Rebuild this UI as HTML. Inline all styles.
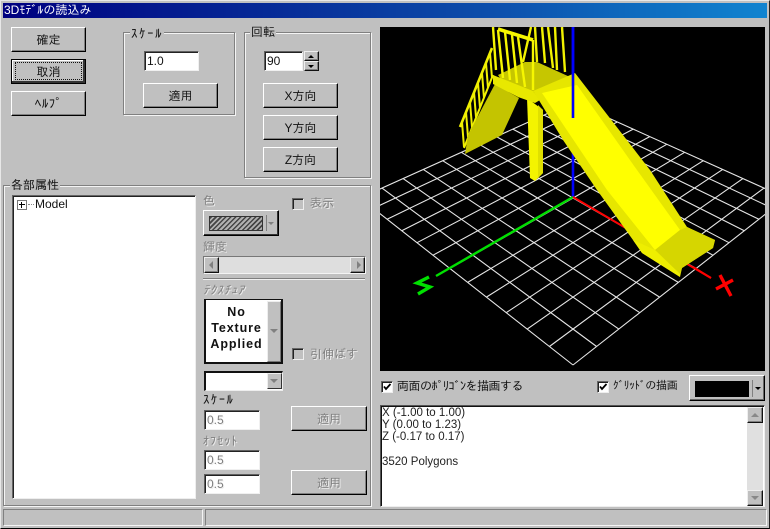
<!DOCTYPE html>
<html lang="ja"><head><meta charset="utf-8"><title>3Dモデルの読込み</title>
<style>
html,body{margin:0;padding:0;width:770px;height:529px;overflow:hidden;background:#c0c0c0}
body{position:relative;font:12px/14px "Liberation Sans","IPAGothic","Noto Sans CJK JP",sans-serif;color:#111}
div,span{position:absolute;box-sizing:border-box}
.t{white-space:nowrap}
.title{left:3px;top:3px;width:764px;height:15px;background:linear-gradient(90deg,#000080,#0b49a8 60%,#1084d0);color:#fff;padding-left:1px;font-size:12px;line-height:15px}
.btn{background:#c0c0c0;border:1px solid;border-color:#fff #000 #000 #fff;box-shadow:inset -1px -1px 0 #808080;text-align:center;font-size:12px;display:flex;align-items:center;justify-content:center}
.dis{color:#808080;text-shadow:1px 1px 0 #eee}
.grp{border:1px solid #808080;box-shadow:1px 1px 0 #f4f4f4,inset 1px 1px 0 #f4f4f4}
.lbl{background:#c0c0c0;padding:0 1px;white-space:nowrap;font-size:12px;line-height:13px}
.edit{background:#fff;border:1px solid;border-color:#606060 #f0f0f0 #f0f0f0 #606060;box-shadow:inset 1px 1px 0 #222;padding:2px 0 0 2px;font:12px/14px "Liberation Sans",sans-serif}
.chk{width:12px;height:12px;background:#fff;border:1px solid;border-color:#666 #eee #eee #666;box-shadow:inset 1px 1px 0 #222}
.chk.d{background:#c0c0c0}
.sb{background:#c0c0c0;border:1px solid;border-color:#eee #111 #111 #eee;box-shadow:inset -1px -1px 0 #808080}
.up,.dn{width:0;height:0;border-left:4px solid transparent;border-right:4px solid transparent}
.up{border-bottom:4px solid #666}.dn{border-top:4px solid #666}
</style></head><body>
<div style="left:0;top:0;width:770px;height:529px;border:1px solid;border-color:#e8e8e8 #222 #000 #e8e8e8"></div>
<div class="title t">3Dﾓﾃﾞﾙの読込み</div>

<div class="btn" style="left:11px;top:27px;width:75px;height:25px">確定</div>
<div class="btn" style="left:11px;top:59px;width:75px;height:25px;outline:1px solid #000;outline-offset:-1px;box-shadow:inset -2px -2px 0 #333,inset 1px 1px 0 #fff">取消</div>
<div style="left:15px;top:62px;width:67px;height:18px;border:1px dotted #111"></div>
<div class="btn" style="left:11px;top:91px;width:75px;height:25px;font-size:13px;letter-spacing:.5px">ﾍﾙﾌﾟ</div>

<div class="grp" style="left:123px;top:32px;width:112px;height:83px"></div>
<div class="lbl" style="left:130px;top:27px;font-size:13px;letter-spacing:1.5px">ｽｹｰﾙ</div>
<div class="edit" style="left:144px;top:51px;width:55px;height:20px">1.0</div>
<div class="btn" style="left:143px;top:83px;width:75px;height:25px">適用</div>

<div class="grp" style="left:244px;top:32px;width:127px;height:146px"></div>
<div class="lbl" style="left:250px;top:26px;">回転</div>
<div class="edit" style="left:264px;top:51px;width:39px;height:20px">90</div>
<div class="sb" style="left:304px;top:51px;width:15px;height:10px"><span class="up" style="left:3px;top:3px;border-left-width:3px;border-right-width:3px;border-bottom-width:3px;border-bottom-color:#000"></span></div>
<div class="sb" style="left:304px;top:61px;width:15px;height:10px"><span class="dn" style="left:3px;top:3px;border-left-width:3px;border-right-width:3px;border-top-width:3px;border-top-color:#000"></span></div>
<div class="btn" style="left:263px;top:83px;width:75px;height:25px">X方向</div>
<div class="btn" style="left:263px;top:115px;width:75px;height:25px">Y方向</div>
<div class="btn" style="left:263px;top:147px;width:75px;height:25px">Z方向</div>

<div class="grp" style="left:3px;top:185px;width:368px;height:321px"></div>
<div class="lbl" style="left:10px;top:178px;line-height:14px">各部属性</div>
<div style="left:12px;top:195px;width:184px;height:304px;background:#fff;border:1px solid;border-color:#666 #eee #eee #666;box-shadow:inset 1px 1px 0 #222"></div>
<div style="left:17px;top:200px;width:10px;height:10px;border:1px solid #777;background:#fff"></div>
<div style="left:19px;top:204px;width:6px;height:1px;background:#000"></div>
<div style="left:21px;top:202px;width:1px;height:6px;background:#000"></div>
<div style="left:28px;top:204px;width:6px;border-top:1px dotted #888"></div>
<div class="t" style="left:35px;top:197px;font:12px/14px 'Liberation Sans',sans-serif">Model</div>

<div class="t dis" style="left:203px;top:194px;">色</div>
<div class="btn" style="left:203px;top:210px;width:76px;height:26px;box-shadow:inset -1px -1px 0 #333"></div>
<div style="left:209px;top:216px;width:54px;height:15px;border:1px solid #333;background:repeating-linear-gradient(135deg,#444 0 1.5px,#b0b0b0 1.5px 3.5px)"></div>
<div style="left:266px;top:215px;width:1px;height:16px;background:#808080"></div>
<span class="dn" style="left:268px;top:222px;border-left-width:3px;border-right-width:3px;border-top-width:3px;border-top-color:#808080"></span>
<div class="chk d" style="left:292px;top:198px"></div>
<div class="t dis" style="left:310px;top:196px;">表示</div>
<div class="t dis" style="left:203px;top:240px;">輝度</div>
<div style="left:203px;top:256px;width:163px;height:18px;background:#dedede;border:1px solid;border-color:#777 #f4f4f4 #f4f4f4 #777"></div>
<div class="sb" style="left:204px;top:257px;width:15px;height:16px"><span style="left:4px;top:3px;border:4px solid transparent;border-left:0;border-right:4px solid #808080"></span></div>
<div class="sb" style="left:350px;top:257px;width:15px;height:16px"><span style="left:6px;top:3px;border:4px solid transparent;border-right:0;border-left:4px solid #808080"></span></div>
<div style="left:203px;top:278px;width:162px;height:2px;background:#808080;border-bottom:1px solid #f0f0f0"></div>
<div class="t dis" style="left:203px;top:283px;font-style:italic;letter-spacing:1px">ﾃｸｽﾁｭｱ</div>
<div style="left:204px;top:299px;width:79px;height:65px;background:#fff;border:1px solid #111;border-width:1px 2px 2px 2px"></div>
<div style="left:206px;top:304px;width:61px;text-align:center;font:bold 12.5px/16px 'Liberation Sans',sans-serif;letter-spacing:.9px;color:#111">No<br>Texture<br>Applied</div>
<div style="left:267px;top:301px;width:14px;height:61px;background:#c0c0c0;border:1px solid;border-color:#eee #777 #777 #eee"></div>
<span class="dn" style="left:270px;top:329px;border-top-color:#808080"></span>
<div class="chk d" style="left:292px;top:348px"></div>
<div class="t dis" style="left:310px;top:347px;">引伸ばす</div>
<div style="left:204px;top:371px;width:79px;height:20px;background:#fff;border:1px solid;border-color:#111 #eee #eee #111;border-width:2px 1px 1px 2px"></div>
<div style="left:267px;top:373px;width:15px;height:16px;background:#c0c0c0;border:1px solid;border-color:#eee #333 #333 #eee"></div>
<span class="dn" style="left:270px;top:379px;border-top-color:#808080"></span>
<div class="t" style="left:203px;top:393px;font-size:13px;letter-spacing:1.3px;color:#111">ｽｹｰﾙ</div>
<div class="edit dis" style="left:204px;top:410px;width:56px;height:20px">0.5</div>
<div class="btn dis" style="left:291px;top:406px;width:76px;height:25px">適用</div>
<div class="t dis" style="left:203px;top:434px;letter-spacing:1px">ｵﾌｾｯﾄ</div>
<div class="edit dis" style="left:204px;top:450px;width:56px;height:20px">0.5</div>
<div class="edit dis" style="left:204px;top:474px;width:56px;height:20px">0.5</div>
<div class="btn dis" style="left:291px;top:470px;width:76px;height:25px">適用</div>

<svg style="position:absolute;left:380px;top:27px" width="385" height="344" viewBox="380 27 385 344">
<rect x="380" y="27" width="385" height="344" fill="#000"/>
<g stroke="#e6e6e6" stroke-width="1.1" fill="none">
<path d="M573 365L786 198M549.4 346.5L764 188.1M527.2 329.1L742.9 178.6M506.2 312.7L722.7 169.4M486.4 297.1L703.3 160.7M467.7 282.4L684.7 152.3M449.9 268.5L666.8 144.3M433 255.2L649.7 136.6M417 242.7L633.2 129.1M401.7 230.7L617.3 122M387.1 219.3L602 115.1M373.2 208.4L587.2 108.4M360 198L573 102"/>
<path d="M573 365L360 198M596.6 346.5L382 188.1M618.8 329.1L403.1 178.6M639.8 312.7L423.3 169.4M659.6 297.1L442.7 160.7M678.3 282.4L461.3 152.3M696.1 268.5L479.2 144.3M713 255.2L496.3 136.6M729 242.7L512.8 129.1M744.3 230.7L528.7 122M758.9 219.3L544 115.1M772.8 208.4L558.8 108.4M786 198L573 102"/>
</g>
<!-- axes -->
<path d="M573 27V197" stroke="#0000ff" stroke-width="2.6"/>
<path d="M573 197L436 276" stroke="#00e000" stroke-width="2.4"/>
<path d="M573 197L711 278" stroke="#ff0000" stroke-width="2"/>
<path d="M429 277L417 283L430 287L418 294" stroke="#00e000" stroke-width="3.4" fill="none"/>
<path d="M720 275L731 296M716 289L733 280" stroke="#ff0000" stroke-width="3.4" fill="none"/>
<!-- stair rail lattice -->
<g stroke="#f0f000" stroke-width="2" fill="none">
<path d="M492 48L460 127" stroke-width="2.6"/>
<path d="M493 75L464 148" stroke-width="2"/>
<path d="M462 122L464 147M466 112L468 137M470 102L472 127M474 92L476 117M478 83L480 108M482 73L484 98M486 63L488 88M490 53L492 78"/>
</g>
<!-- stair underside -->
<polygon points="495,84 519,98 502,135 465,154 468,135" fill="#c4c400"/>
<!-- pillar -->
<polygon points="527,98 543,110 543,173 535,181 530,178" fill="#f4f400"/>
<polygon points="538,105 543,110 543,173 538,178" fill="#e0e000"/>
<!-- rear balusters -->
<g stroke="#f2f200" stroke-width="2.4" fill="none">
<path d="M531 27L523 62M535 27L537 62M542 27L545 63M548 27L553 68M555 27L557 70M562 27L565 72"/>
</g>
<!-- platform top -->
<polygon points="498,75 525,62 537,62 570,77 538,90 533,92 500,78" fill="#c6c600"/>
<!-- beam -->
<polygon points="493,75 533,91 540,100 535,103 518,97 493,84" fill="#e8e800"/>
<!-- front balusters and rail -->
<g stroke="#f6f600" stroke-width="2.4" fill="none">
<path d="M493 27L496 70M498 30L503 78M505 32L510 80M512 35L517 83M518 37L525 87M533 40V90"/>
<path d="M498 29L533 40" stroke-width="3.6"/>
</g>
<!-- slide -->
<polygon points="533,91 540,88 575,73 650,170 687,227 715,240 713,248 682,268 680,277 642,253 633,240 597,190 563,140 537,97" fill="#e6e600"/>
<polygon points="542,93 577,85 637,170 680,230 655,250 607,190" fill="#ffff00"/>
<polygon points="655,250 680,230 687,227 715,240 713,248 682,268 680,274" fill="#d6d600"/>
<polygon points="633,240 655,250 680,274 680,277 642,253" fill="#eeee00"/>
<path d="M693 267L711 278" stroke="#ff0000" stroke-width="2"/>
<path d="M573 27V118" stroke="#0000ff" stroke-width="2.6"/>
</svg>

<div class="chk" style="left:381px;top:381px"></div>
<svg style="position:absolute;left:381px;top:381px" width="12" height="12"><path d="M3 5.5L5 8L9.5 3" stroke="#000" stroke-width="1.8" fill="none"/></svg>
<div class="t" style="left:397px;top:379px;letter-spacing:-.5px">両面のﾎﾟﾘｺﾞﾝを描画する</div>
<div class="chk" style="left:597px;top:381px"></div>
<svg style="position:absolute;left:597px;top:381px" width="12" height="12"><path d="M3 5.5L5 8L9.5 3" stroke="#000" stroke-width="1.8" fill="none"/></svg>
<div class="t" style="left:613px;top:379px;font-size:11px;letter-spacing:-.2px">ｸﾞﾘｯﾄﾞの描画</div>
<div class="btn" style="left:689px;top:375px;width:76px;height:26px;box-shadow:inset -1px -1px 0 #666"></div>
<div style="left:695px;top:381px;width:54px;height:16px;background:#000"></div>
<div style="left:752px;top:380px;width:1px;height:17px;background:#808080"></div>
<span class="dn" style="left:755px;top:387px;border-left-width:3px;border-right-width:3px;border-top-width:3px;border-top-color:#000"></span>

<div style="left:380px;top:405px;width:385px;height:102px;background:#fff;border:1px solid;border-color:#555 #eee #eee #555;box-shadow:inset 1px 1px 0 #111"></div>
<div class="t" style="left:382px;top:407px;font:11.5px/12.2px 'Liberation Sans',sans-serif;color:#222">X (-1.00 to 1.00)<br>Y (0.00 to 1.23)<br>Z (-0.17 to 0.17)<br><br>3520 Polygons</div>
<div style="left:747px;top:407px;width:16px;height:99px;background:#e0e0e0"></div>
<div class="sb" style="left:747px;top:407px;width:16px;height:16px"><span class="up" style="left:3px;top:5px;border-bottom-color:#888"></span></div>
<div class="sb" style="left:747px;top:490px;width:16px;height:16px"><span class="dn" style="left:3px;top:5px;border-top-color:#888"></span></div>

<div style="left:3px;top:509px;width:200px;height:17px;border:1px solid;border-color:#808080 #f4f4f4 #f4f4f4 #808080"></div>
<div style="left:205px;top:509px;width:562px;height:17px;border:1px solid;border-color:#808080 #f4f4f4 #f4f4f4 #808080"></div>
</body></html>
